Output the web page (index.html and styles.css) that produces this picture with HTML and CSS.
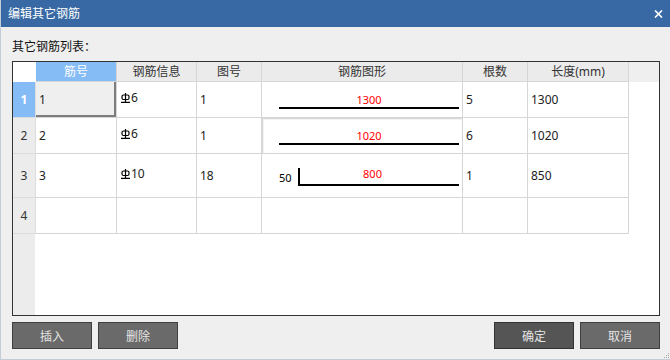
FILE: index.html
```html
<!DOCTYPE html>
<html lang="zh-CN">
<head>
    <meta charset="UTF-8">
    <title>编辑其它钢筋</title>
    <link rel="stylesheet" href="styles.css">
</head>
<body>
    <div class="window">
        <div class="titlebar">
            <span class="title">编辑其它钢筋</span>
            <span class="close">
                <svg width="9" height="8" viewBox="0 0 9 8"><path d="M1 0.5 L8 7.5 M8 0.5 L1 7.5" stroke="#fff" stroke-width="1.6"/></svg>
            </span>
        </div>

        <div class="content">
            <div class="caption">其它钢筋列表：</div>

            <div class="grid">
                <table class="rebar-table">
                    <colgroup>
                        <col style="width:23px">
                        <col style="width:81px">
                        <col style="width:80px">
                        <col style="width:65px">
                        <col style="width:201px">
                        <col style="width:65px">
                        <col style="width:101px">
                        <col>
                    </colgroup>
                    <thead>
                        <tr>
                            <th class="corner"></th>
                            <th class="active">筋号</th>
                            <th>钢筋信息</th>
                            <th>图号</th>
                            <th>钢筋图形</th>
                            <th>根数</th>
                            <th>长度(mm)</th>
                            <th class="filler"></th>
                        </tr>
                    </thead>
                    <tbody>
                        <tr>
                            <td class="rowhead active">1</td>
                            <td class="current">1</td>
                            <td class="info"><svg class="grade" width="9" height="10" viewBox="0 0 9 10"><rect x="1" y="2" width="7" height="4.5" rx="1.5" fill="none" stroke="#000" stroke-width="1.2"/><path d="M4.5 0 V9.5 M0 9.4 H9" stroke="#000" stroke-width="1.2"/></svg>6</td>
                            <td>1</td>
                            <td class="figure">
                                <div class="shape">
                                    <span class="len">1300</span>
                                    <div class="bar"></div>
                                </div>
                            </td>
                            <td>5</td>
                            <td>1300</td>
                            <td class="filler"></td>
                        </tr>
                        <tr>
                            <td class="rowhead">2</td>
                            <td>2</td>
                            <td class="info"><svg class="grade" width="9" height="10" viewBox="0 0 9 10"><rect x="1" y="2" width="7" height="4.5" rx="1.5" fill="none" stroke="#000" stroke-width="1.2"/><path d="M4.5 0 V9.5 M0 9.4 H9" stroke="#000" stroke-width="1.2"/></svg>6</td>
                            <td>1</td>
                            <td class="figure editing">
                                <div class="shape">
                                    <span class="len">1020</span>
                                    <div class="bar"></div>
                                </div>
                            </td>
                            <td>6</td>
                            <td>1020</td>
                            <td class="filler"></td>
                        </tr>
                        <tr class="tall">
                            <td class="rowhead">3</td>
                            <td>3</td>
                            <td class="info"><svg class="grade" width="9" height="10" viewBox="0 0 9 10"><rect x="1" y="2" width="7" height="4.5" rx="1.5" fill="none" stroke="#000" stroke-width="1.2"/><path d="M4.5 0 V9.5 M0 9.4 H9" stroke="#000" stroke-width="1.2"/></svg>10</td>
                            <td>18</td>
                            <td class="figure">
                                <div class="shape bent">
                                    <span class="leg">50</span>
                                    <div class="hook"><span class="len">800</span></div>
                                </div>
                            </td>
                            <td>1</td>
                            <td>850</td>
                            <td class="filler"></td>
                        </tr>
                        <tr>
                            <td class="rowhead">4</td>
                            <td></td>
                            <td></td>
                            <td></td>
                            <td></td>
                            <td></td>
                            <td></td>
                            <td class="filler"></td>
                        </tr>
                    </tbody>
                </table>
            </div>

            <div class="actions">
                <div class="btn-group">
                    <button class="btn">插入</button>
                    <button class="btn">删除</button>
                </div>
                <div class="btn-group">
                    <button class="btn primary">确定</button>
                    <button class="btn">取消</button>
                </div>
            </div>
        </div>

        <svg class="grip" width="7" height="7" viewBox="0 0 7 7">
            <rect x="5" y="1" width="1" height="1" fill="#a8a8a8"/>
            <rect x="3" y="3" width="1" height="1" fill="#a8a8a8"/>
            <rect x="5" y="3" width="1" height="1" fill="#a8a8a8"/>
            <rect x="1" y="5" width="1" height="1" fill="#a8a8a8"/>
            <rect x="3" y="5" width="1" height="1" fill="#a8a8a8"/>
            <rect x="5" y="5" width="1" height="1" fill="#a8a8a8"/>
        </svg>
    </div>
</body>
</html>
```

FILE: styles.css
```css
* {
    box-sizing: border-box;
}
body {
    margin: 0;
    font-family: "Noto Sans", "Noto Sans CJK SC", sans-serif;
    font-size: 12px;
    color: #222;
    background-color: #efefef;
}
.window {
    position: relative;
    width: 670px;
    height: 360px;
    background-color: #efefef;
    border-left: 1px solid #c4ccd8;
    border-bottom: 1px solid #c4ccd8;
    overflow: hidden;
}
.titlebar {
    display: flex;
    align-items: center;
    justify-content: space-between;
    height: 27px;
    margin-left: -1px;
    padding: 0 7px 0 8px;
    background-color: #3869a4;
    color: #fff;
}
.title {
    font-size: 12px;
    line-height: 14px;
}
.close {
    display: flex;
    margin-top: 1px;
}
.content {
    padding: 0 10px 0 11px;
}
.caption {
    margin-top: 13px;
    line-height: 14px;
    color: #111;
}
.grid {
    margin-top: 7px;
    height: 255px;
    border: 1px solid #333;
    background: linear-gradient(to right, #ececec 22px, #fff 22px);
    overflow: hidden;
}
.rebar-table {
    width: 100%;
    table-layout: fixed;
    border-collapse: separate;
    border-spacing: 0;
}
.rebar-table th,
.rebar-table td {
    padding: 0 0 0 3px;
    border-right: 1px solid #d6d6d6;
    border-bottom: 1px solid #d6d6d6;
    white-space: nowrap;
    overflow: hidden;
}
.rebar-table thead tr {
    height: 20px;
}
.rebar-table th {
    padding: 0;
    font-weight: normal;
    color: #333;
    background-color: #ebebeb;
    text-align: center;
    line-height: 14px;
}
.rebar-table th.corner {
    background-color: #fff;
    border-color: #fff;
}
.rebar-table th.active {
    background-color: #85bcf5;
    color: #fff;
}
.rebar-table th.filler {
    background-color: #efefef;
    border: none;
}
.rebar-table tbody tr {
    height: 36px;
}
.rebar-table tbody tr.tall {
    height: 44px;
}
.rebar-table td {
    background-color: #fff;
    vertical-align: middle;
}
.rebar-table td.filler {
    border: none;
    background-color: #fff;
}
.rebar-table td.rowhead {
    padding: 0;
    background-color: #ececec;
    color: #333;
    text-align: center;
    border-color: #dcdcdc;
}
.rebar-table td.rowhead.active {
    background-color: #85bcf5;
    color: #fff;
    font-weight: bold;
}
.rebar-table td.current {
    background-color: #efefef;
    box-shadow: inset -2px -2px 0 #7d7d7d;
}
.rebar-table td.info {
    padding-left: 4px;
    padding-bottom: 5px;
    color: #222;
}
.grade {
    margin-right: 1px;
    vertical-align: -1px;
}
.rebar-table td.figure {
    padding: 0;
    vertical-align: top;
}
.rebar-table td.editing {
    box-shadow: inset 1px 1px 0 #d6d6d6, inset 2px 2px 0 #f4f4f4;
}
.shape {
    display: flex;
    flex-direction: column;
    padding: 11px 3px 0 17px;
}
.len {
    display: block;
    font-size: 11px;
    line-height: 13px;
    color: #f00;
    text-align: center;
}
.bar {
    margin-top: 1px;
    border-top: 2px solid #000;
}
.shape.bent {
    flex-direction: row;
    align-items: flex-end;
    padding-top: 14px;
}
.leg {
    width: 19px;
    font-size: 11px;
    line-height: 13px;
    margin-bottom: 2px;
    color: #000;
}
.hook {
    flex: 1;
    height: 18px;
    border-left: 2px solid #000;
    border-bottom: 2px solid #000;
}
.hook .len {
    padding-right: 14px;
    line-height: 12px;
}
.actions {
    display: flex;
    justify-content: space-between;
    margin-top: 6px;
}
.btn-group {
    display: flex;
    gap: 6px;
}
.btn {
    width: 80px;
    height: 27px;
    padding: 0;
    font-family: "Noto Sans", "Noto Sans CJK SC", sans-serif;
    font-size: 12px;
    color: #e4e4e4;
    background-color: #6a6a6a;
    border: 1px solid #3f3f3f;
}
.btn.primary {
    background-color: #555;
    border-color: #333;
}
.grip {
    position: absolute;
    right: 0;
    bottom: 0;
}
```
